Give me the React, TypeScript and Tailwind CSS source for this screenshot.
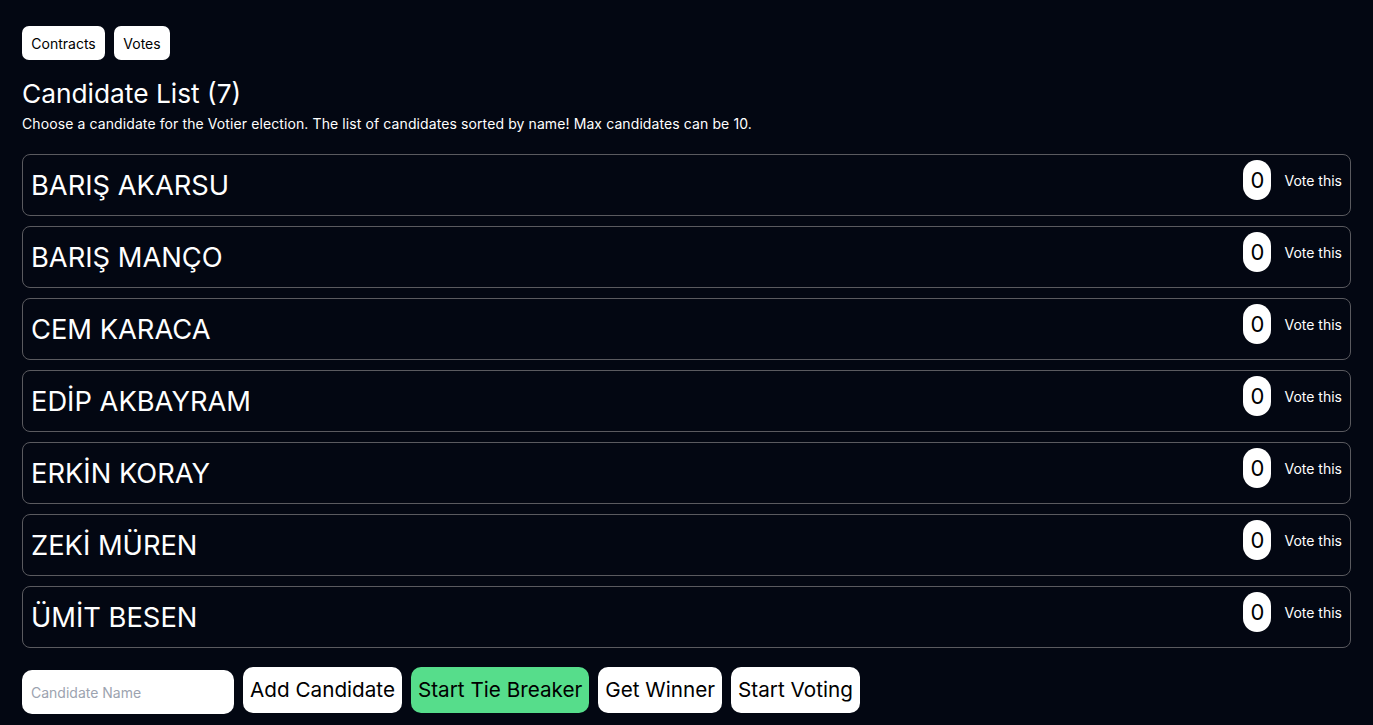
import React from "react";

const names = [
  "BARIŞ AKARSU",
  "BARIŞ MANÇO",
  "CEM KARACA",
  "EDİP AKBAYRAM",
  "ERKİN KORAY",
  "ZEKİ MÜREN",
  "ÜMİT BESEN",
];

export default function App() {
  return (
    <div
      className="min-h-[725px] w-full bg-[#030712] text-white px-[22px] pt-[26px]"
      style={{ fontFamily: "Inter, 'Noto Sans', sans-serif" }}
    >
      <div className="flex gap-[9px]">
        <button className="h-[34px] w-[83px] rounded-[7px] bg-white text-black text-[14px]">Contracts</button>
        <button className="h-[34px] w-[56px] rounded-[7px] bg-white text-black text-[14px]">Votes</button>
      </div>
      <h1 className="mt-[16px] text-[26.3px] leading-[36px] font-normal">Candidate List ({names.length})</h1>
      <p className="mt-[2px] text-[14px] leading-[20px] tracking-[0.1px]">
        Choose a candidate for the Votier election. The list of candidates sorted by name! Max candidates can be 10.
      </p>
      <div className="mt-[20px] flex flex-col gap-[10px]">
        {names.map((n) => (
          <div
            key={n}
            className="h-[62px] w-[1329px] border border-[#5a5a5f] rounded-[8px] flex justify-between items-start pl-[8px] pr-[8px]"
          >
            <div className="self-center text-[27.3px] leading-[36px] pt-[1px]">{n}</div>
            <div className="flex items-center gap-[13px] mt-[5px]">
              <div className="h-[40px] w-[28px] rounded-full bg-white text-black text-[22px] flex items-center justify-center">0</div>
              <div className="text-[14px]">Vote this</div>
            </div>
          </div>
        ))}
      </div>
      <div className="mt-[18px] flex items-center gap-[9px]">
        <input
          placeholder="Candidate Name"
          className="h-[44px] w-[212px] mt-[4px] rounded-[10px] bg-white text-black text-[14px] px-[9px] placeholder:text-[#9ca3af] outline-none"
        />
        <button className="h-[46px] px-[7px] rounded-[10px] bg-white text-black text-[20.7px]">Add Candidate</button>
        <button className="h-[46px] px-[7px] rounded-[10px] bg-[#56dd8b] text-black text-[20.7px]">Start Tie Breaker</button>
        <button className="h-[46px] px-[7px] rounded-[10px] bg-white text-black text-[20.7px]">Get Winner</button>
        <button className="h-[46px] px-[7px] rounded-[10px] bg-white text-black text-[20.7px]">Start Voting</button>
      </div>
    </div>
  );
}
